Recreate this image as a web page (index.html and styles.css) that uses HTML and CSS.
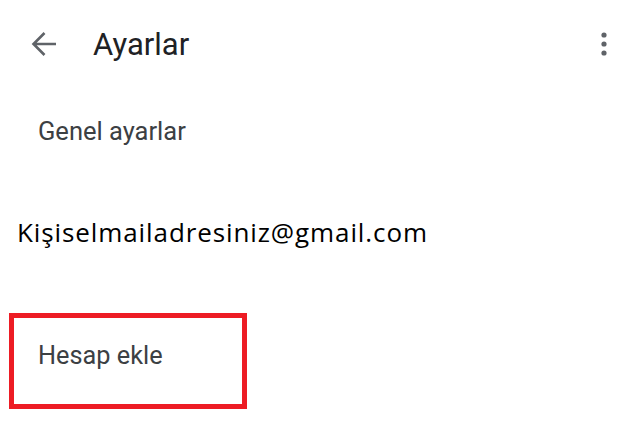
FILE: index.html
```html
<!DOCTYPE html>
<html lang="tr">
<head>
    <meta charset="UTF-8">
    <meta name="viewport" content="width=device-width, initial-scale=1.0">
    <title>Ayarlar</title>
    <link rel="stylesheet" href="styles.css">
</head>
<body>

<div class="ekran">
    <div class="ust-bar">
        <svg class="geri" viewBox="0 0 26 26" width="26" height="26">
            <path d="M25 13H2.5M13.5 2L2.5 13l11 11" fill="none" stroke="#5f6368" stroke-width="2.6"/>
        </svg>
        <h1 class="baslik">Ayarlar</h1>
        <svg class="menu" viewBox="0 0 10 28" width="10" height="28">
            <circle cx="5" cy="5" r="2.6" fill="#5f6368"/>
            <circle cx="5" cy="14" r="2.6" fill="#5f6368"/>
            <circle cx="5" cy="23" r="2.6" fill="#5f6368"/>
        </svg>
    </div>

    <div class="satir genel">Genel ayarlar</div>

    <div class="satir eposta">Kişiselmailadresiniz@gmail.com</div>

    <div class="hesap-kutu">
        <div class="hesap">Hesap ekle</div>
    </div>
</div>

</body>
</html>
```

FILE: styles.css
```css
body {
    margin: 0;
    padding: 0;
    background: #fff;
    font-family: Roboto, 'Noto Sans', sans-serif;
    color: #202124;
}
.ekran {
    width: 640px;
    height: 438px;
    overflow: hidden;
}
.ust-bar {
    display: flex;
    align-items: center;
    height: 88px;
    padding: 0 31px 0 31px;
}
.geri {
    flex: none;
}
.baslik {
    margin: 0 0 0 36px;
    font-size: 31px;
    font-weight: 400;
    flex: 1;
    color: #202124;
}
.menu {
    flex: none;
}
.satir {
    display: flex;
    align-items: center;
}
.genel {
    height: 86px;
    padding-left: 38px;
    font-size: 25.5px;
    color: #3c4043;
}
.eposta {
    height: 106px;
    padding-left: 17px;
    margin-top: 5px;
    font-family: 'Open Sans', sans-serif;
    font-size: 26px;
    letter-spacing: 0.9px;
    color: #000;
}
.hesap-kutu {
    margin: 28px 0 0 9px;
    width: 228px;
    height: 86px;
    border: 5px solid #ed1c24;
}
.hesap {
    padding: 23px 0 0 24px;
    font-size: 25.3px;
    line-height: 30px;
    color: #3c4043;
}
```
